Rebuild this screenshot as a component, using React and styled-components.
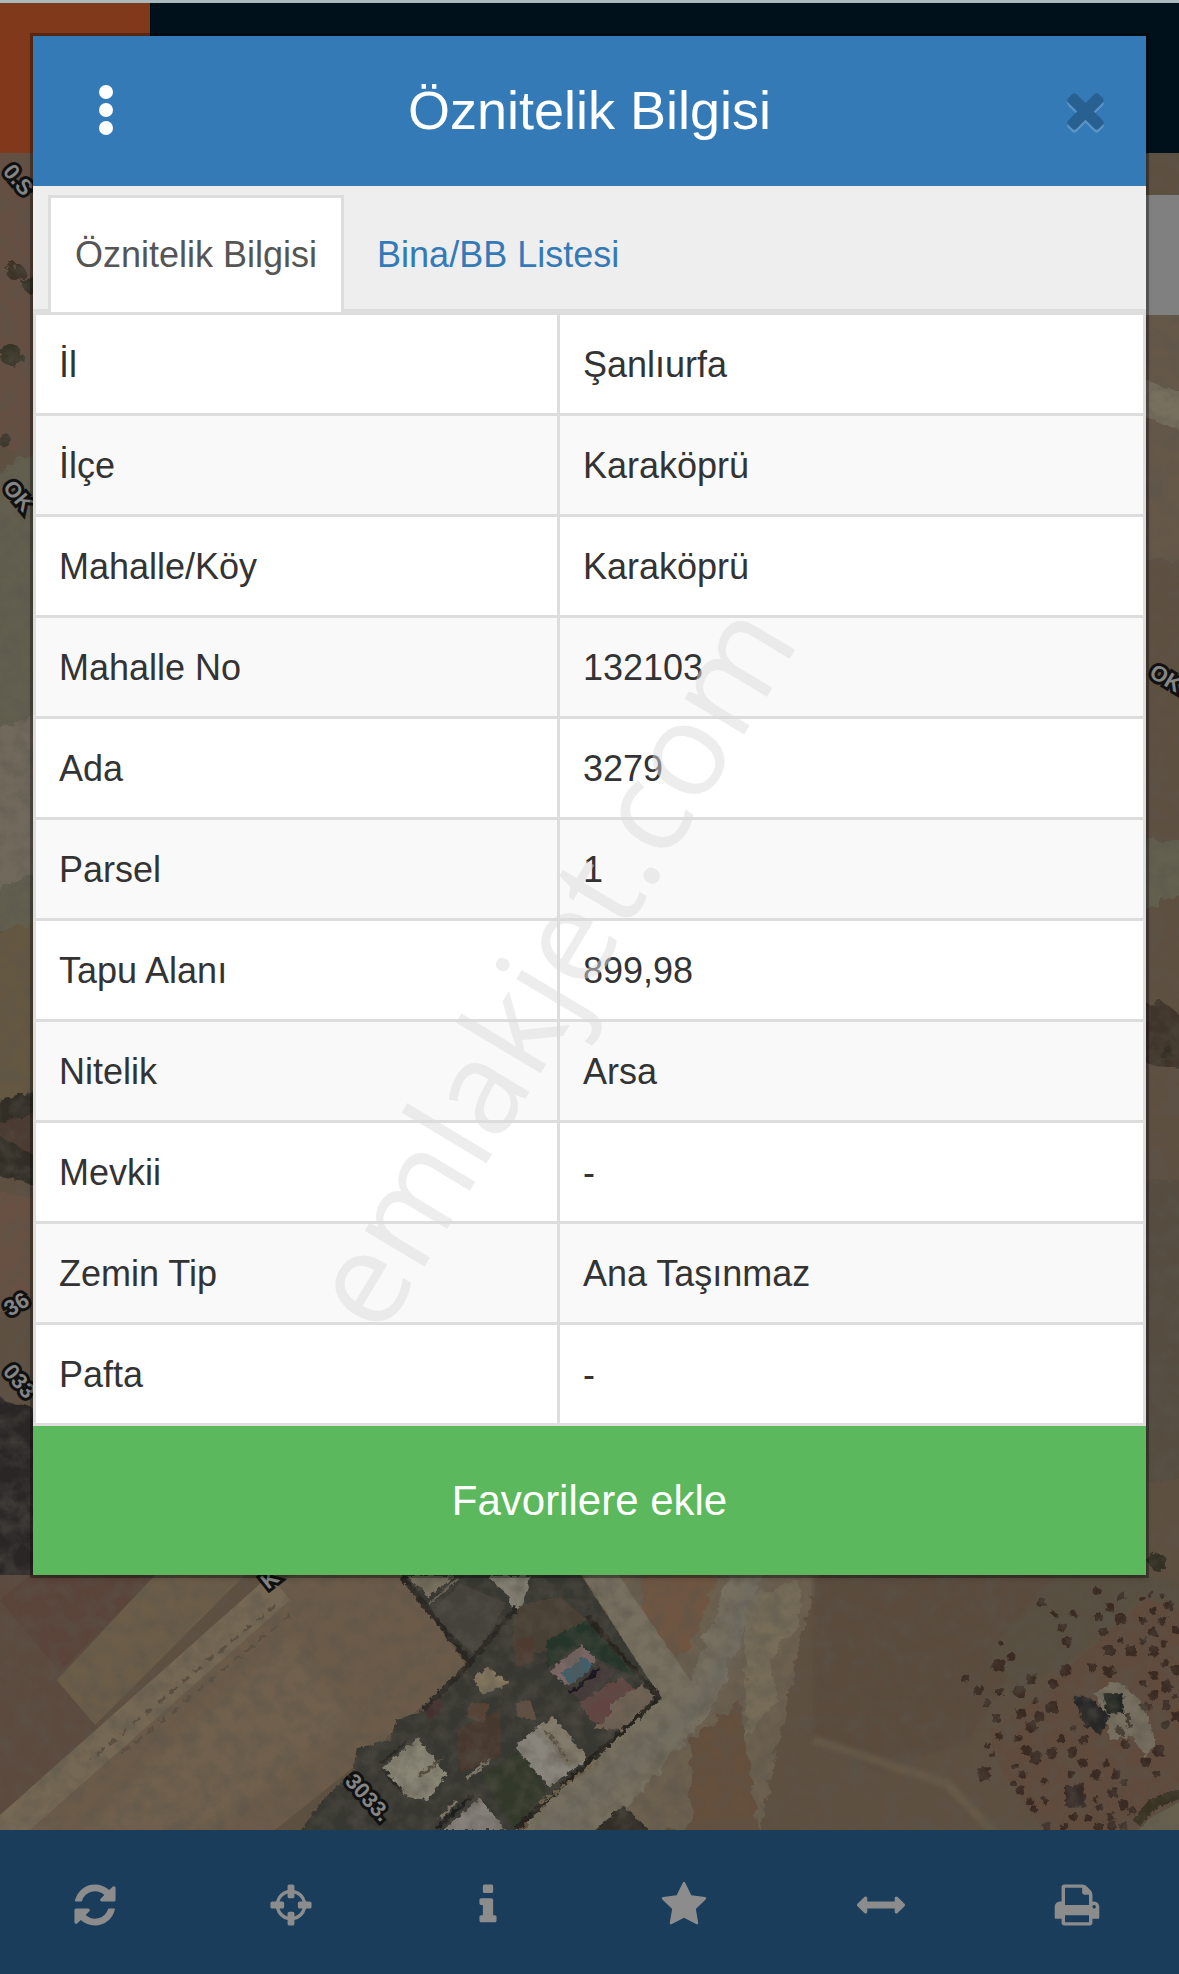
import styled, { createGlobalStyle } from "styled-components";

const rows = [
  ["İl", "Şanlıurfa"],
  ["İlçe", "Karaköprü"],
  ["Mahalle/Köy", "Karaköprü"],
  ["Mahalle No", "132103"],
  ["Ada", "3279"],
  ["Parsel", "1"],
  ["Tapu Alanı", "899,98"],
  ["Nitelik", "Arsa"],
  ["Mevkii", "-"],
  ["Zemin Tip", "Ana Taşınmaz"],
  ["Pafta", "-"],
];

// 1792 birimlik ikon çizimleri
const icons = {
  refresh:
    "M1639 1056q0 5-1 7-64 268-268 434.5t-478 166.5q-146 0-282.5-55t-243.5-157l-129 129q-19 19-45 19t-45-19-19-45v-448q0-26 19-45t45-19h448q26 0 45 19t19 45-19 45l-137 137q71 66 161 102t187 36q134 0 250-65t186-179q11-17 53-117 8-23 30-23h192q13 0 22.5 9.5t9.5 22.5zm25-800v448q0 26-19 45t-45 19h-448q-26 0-45-19t-19-45 19-45l138-138q-148-137-349-137-134 0-250 65t-186 179q-11 17-53 117-8 23-30 23h-199q-13 0-22.5-9.5t-9.5-22.5v-7q65-268 270-434.5t480-166.5q146 0 284 55.5t245 156.5l130-129q19-19 45-19t45 19 19 45z",
  crosshairs:
    "M1325 1024h-109q-26 0-45-19t-19-45v-128q0-26 19-45t45-19h109q-32-108-112.5-188.5t-188.5-112.5v109q0 26-19 45t-45 19h-128q-26 0-45-19t-19-45v-109q-108 32-188.5 112.5t-112.5 188.5h109q26 0 45 19t19 45v128q0 26-19 45t-45 19h-109q32 108 112.5 188.5t188.5 112.5v-109q0-26 19-45t45-19h128q26 0 45 19t19 45v109q108-32 188.5-112.5t112.5-188.5zm339-192v128q0 26-19 45t-45 19h-143q-37 161-154.5 278.5t-278.5 154.5v143q0 26-19 45t-45 19h-128q-26 0-45-19t-19-45v-143q-161-37-278.5-154.5t-154.5-278.5h-143q-26 0-45-19t-19-45v-128q0-26 19-45t45-19h143q37-161 154.5-278.5t278.5-154.5v-143q0-26 19-45t45-19h128q26 0 45 19t19 45v143q161 37 278.5 154.5t154.5 278.5h143q26 0 45 19t19 45z",
  info: "M1216 1344v128q0 26-19 45t-45 19h-512q-26 0-45-19t-19-45v-128q0-26 19-45t45-19h64v-384h-64q-26 0-45-19t-19-45v-128q0-26 19-45t45-19h384q26 0 45 19t19 45v576h64q26 0 45 19t19 45zm-128-1152v192q0 26-19 45t-45 19h-256q-26 0-45-19t-19-45v-192q0-26 19-45t45-19h256q26 0 45 19t19 45z",
  star: "M1728 647q0 22-26 48l-363 354 86 500q1 7 1 20 0 21-10.5 35.5t-30.5 14.5q-19 0-40-12l-449-236-449 236q-22 12-40 12-21 0-31.5-14.5t-10.5-35.5q0-6 2-20l86-500-364-354q-25-27-25-48 0-37 56-46l502-73 225-455q19-41 49-41t49 41l225 455 502 73q56 9 56 46z",
  arrows:
    "M1792 896q0 26-19 45l-256 256q-19 19-45 19t-45-19-19-45v-128h-1024v128q0 26-19 45t-45 19-45-19l-256-256q-19-19-19-45t19-45l256-256q19-19 45-19t45 19 19 45v128h1024v-128q0-26 19-45t45-19 45 19l256 256q19 19 19 45z",
  print:
    "M448 1536h896v-256h-896v256zm0-640h896v-384h-160q-40 0-68-28t-28-68v-160h-640v640zm1152 64q0-26-19-45t-45-19-45 19-19 45 19 45 45 19 45-19 19-45zm128 0v416q0 13-9.5 22.5t-22.5 9.5h-224v160q0 40-28 68t-68 28h-960q-40 0-68-28t-28-68v-160h-224q-13 0-22.5-9.5t-9.5-22.5v-416q0-79 56.5-135.5t135.5-56.5h64v-544q0-40 28-68t68-28h672q40 0 88 20t76 48l152 152q28 28 48 76t20 88v256h64q79 0 135.5 56.5t56.5 135.5z",
  times:
    "M1490 1322q0 40-28 68l-136 136q-28 28-68 28t-68-28l-294-294-294 294q-28 28-68 28t-68-28l-136-136q-28-28-28-68t28-68l294-294-294-294q-28-28-28-68t28-68l136-136q28-28 68-28t68 28l294 294 294-294q28-28 68-28t68 28l136 136q28 28 28 68t-28 68l-294 294 294 294q28 28 28 68z",
};

const tools = [
  ["refresh", "Yenile"],
  ["crosshairs", "Konumum"],
  ["info", "Bilgi"],
  ["star", "Favoriler"],
  ["arrows", "Ölçüm"],
  ["print", "Yazdır"],
];

// ağaçlar: x, y, boyut
const trees = [
  [785, 98, 26], [825, 132, 20], [846, 172, 24], [880, 130, 22], [862, 215, 28],
  [950, 62, 24], [1022, 80, 22], [988, 113, 24], [1022, 146, 34], [955, 140, 22],
  [970, 184, 26], [1088, 150, 22], [1120, 122, 24], [1148, 150, 26], [1118, 186, 26],
  [1166, 105, 26], [1086, 86, 16], [1110, 76, 14], [1146, 76, 14], [1186, 180, 20],
  [1022, 212, 16], [1088, 212, 20], [1054, 242, 34], [1122, 244, 32], [1150, 222, 16],
  [988, 242, 34], [986, 304, 34], [936, 292, 24], [858, 300, 32], [1122, 316, 26],
  [1154, 280, 24], [1188, 300, 30], [1090, 342, 22], [1160, 350, 32], [1188, 376, 16],
  [694, 260, 24], [656, 286, 38], [664, 222, 14], [558, 324, 20], [596, 362, 28],
  [660, 366, 24], [718, 364, 34], [754, 328, 30], [820, 342, 26], [622, 400, 22],
  [764, 390, 18], [814, 412, 34], [724, 432, 32], [778, 440, 30], [650, 444, 24],
  [754, 470, 34], [656, 498, 22], [714, 506, 22], [878, 474, 16], [846, 506, 22],
  [1120, 376, 28], [1156, 406, 26], [1100, 410, 24], [1188, 440, 26], [1158, 466, 24],
  [1136, 544, 34], [1098, 574, 28], [1038, 524, 26], [910, 510, 26], [880, 546, 32],
  [814, 550, 30], [740, 540, 30], [768, 564, 34], [624, 528, 18], [636, 556, 18],
  [612, 612, 40], [910, 578, 26], [978, 582, 22], [948, 614, 30], [1008, 612, 28],
  [874, 612, 20], [1034, 638, 20], [1132, 612, 20], [794, 632, 22], [726, 614, 20],
  [700, 640, 16], [720, 662, 22], [708, 588, 16], [1000, 668, 26], [944, 690, 18],
  [960, 712, 20], [746, 694, 22], [794, 692, 20], [762, 716, 20], [1030, 704, 30],
  [1056, 722, 24], [880, 740, 22], [924, 746, 22], [990, 742, 26], [800, 770, 24],
  [956, 770, 26], [996, 768, 26], [1030, 768, 24], [852, 770, 18],
];

function Icon({ name, size }) {
  return (
    <svg width={size} height={size} viewBox="0 0 1792 1792" aria-hidden="true">
      <path d={icons[name]} fill="currentColor" />
    </svg>
  );
}

function Satellite() {
  return (
    <MapSvg viewBox="0 153 1179 1677" preserveAspectRatio="xMidYMid slice">
      <defs>
        <filter id="soil" x="0" y="0" width="100%" height="100%">
          <feTurbulence type="fractalNoise" baseFrequency="0.06" numOctaves="5" seed="7" />
          <feColorMatrix values="0 0 0 0 0.1  0 0 0 0 0.09  0 0 0 0 0.07  2 0 0 0 -0.75" />
        </filter>
        <filter id="rough" x="-10%" y="-10%" width="120%" height="120%">
          <feTurbulence type="fractalNoise" baseFrequency="0.09" numOctaves="3" seed="3" />
          <feDisplacementMap in="SourceGraphic" scale="12" />
        </filter>
        <filter id="ragged" x="-5%" y="-5%" width="110%" height="110%">
          <feTurbulence type="fractalNoise" baseFrequency="0.2" numOctaves="2" seed="5" />
          <feDisplacementMap in="SourceGraphic" scale="7" xChannelSelector="R" yChannelSelector="G" />
        </filter>
        <filter id="haze">
          <feGaussianBlur stdDeviation="7" />
        </filter>
      </defs>
      <rect y="153" width="1179" height="1677" fill="#5e5041" />

      {/* sol kenar */}
      <g filter="url(#rough)">
        <path d="M-20 140H60V470L-20 440Z" fill="#654f42" />
        <path d="M-20 480L60 440V930H-20Z" fill="#645e50" />
        <path d="M-20 740L60 700V860L-20 900Z" fill="#716a5b" />
        <path d="M-20 940L60 910V1100H-20Z" fill="#655942" />
        <path d="M-20 1110L60 1080V1190L20 1180L-20 1170Z" fill="#302d27" />
        <path d="M-20 1125L60 1110V1170Z" fill="#4c3a31" />
        <path d="M-20 1190L60 1200V1290L-20 1320Z" fill="#675143" />
        <path d="M-20 1390L60 1420V1600L0 1612L-20 1600Z" fill="#2b2628" />
        <circle cx="11" cy="355" r="11" fill="#373528" />
        <circle cx="16" cy="272" r="9" fill="#3e3126" />
        <circle cx="30" cy="284" r="8" fill="#38352c" />
        <circle cx="4" cy="440" r="7" fill="#3c392c" />
      </g>

      {/* sağ kenar */}
      <g filter="url(#rough)">
        <path d="M1130 310H1200V560H1130Z" fill="#65584a" />
        <path d="M1130 375L1200 400V440L1130 410Z" fill="#78705f" />
        <path d="M1130 840H1200V880L1130 920Z" fill="#64604f" />
        <path d="M1130 1010L1160 1000L1200 1030V1075L1130 1060Z" fill="#40352a" />
        <path d="M1130 1180H1200V1480H1130Z" fill="#564d3f" />
        <circle cx="1166" cy="1052" r="7" fill="#302b20" />
        <circle cx="1158" cy="1562" r="9" fill="#332d22" />
      </g>

      {/* tarlalar */}
      <path d="M0 1575H160L55 1680L100 1730L0 1830Z" fill="#5d4a3e" />
      <path d="M30 1575H155L60 1672L0 1600Z" fill="#5b443a" />
      <path d="M155 1575H245L95 1725L57 1680Z" fill="#6c5d49" />
      <path d="M290 1575H402L468 1668L420 1708L350 1770L275 1830H0V1822Z" fill="#6c5b49" />
      <path d="M170 1745L290 1640L350 1720L210 1830H90Z" fill="#71604d" filter="url(#haze)" />
      <path d="M270 1575L0 1815V1830H30L290 1600Z" fill="#756854" />
      <path d="M275 1605L90 1760M290 1615L120 1755" stroke="#5b5042" strokeWidth="3" strokeDasharray="9 7" filter="url(#ragged)" />

      {/* yol ve açık toprak */}
      <g filter="url(#rough)">
        <path d="M560 1570H820L800 1640L760 1830H520L640 1700Z" fill="#6c604f" />
        <path d="M640 1570H720L690 1650L650 1670Z" fill="#6f5742" />
        <path d="M690 1740L740 1700L760 1840H690Z" fill="#654f3e" />
        <path d="M580 1570L655 1690L510 1840H600L715 1705L765 1570H730L690 1680L615 1570Z" fill="#777060" />
        <path d="M745 1600L800 1580L800 1620L770 1660L778 1700L745 1740Z" fill="#766c59" />
      </g>
      <path d="M755 1570C735 1640 720 1690 680 1720L540 1835" fill="none" stroke="#6d6962" strokeWidth="14" opacity="0.75" filter="url(#haze)" />

      {/* bahçeler ve evler */}
      <g transform="translate(300 1570) scale(0.3333)">
        <g filter="url(#rough)">
          <path d="M300 10H840L1080 380L640 785H0L60 700L160 600L170 535L270 510L290 450L370 420L510 290L460 220Z" fill="#393731" />
          <path d="M390 130L480 40L620 100L530 260Z" fill="#45423a" />
          <path d="M640 110L780 80L860 150L720 250L640 240Z" fill="#4a4134" />
          <path d="M740 210L860 150L1010 320L960 300L820 230L740 300Z" fill="#26352a" />
          <path d="M470 480L600 420L600 560L480 610Z" fill="#46372d" />
          <path d="M540 620L660 540L740 660L640 780Z" fill="#30372c" />
          <path d="M650 400L690 390L710 450L650 440Z" fill="#605042" />
          <path d="M510 400L570 400L550 460L500 440Z" fill="#574334" />
          <path d="M370 420L420 370L430 410L390 450Z" fill="#432e2f" />
          <path d="M640 210L700 200L700 270L650 290Z" fill="#4e3a32" />
        </g>
      </g>
      <g filter="url(#ragged)">
        <g transform="translate(300 1570) scale(0.3333)">
          <path d="M320 18L385 85L460 18Z" fill="#77705e" />
          <path d="M385 105L475 25" stroke="#6c6656" strokeWidth="8" />
          <path d="M560 18H690L680 70L660 112L632 112L625 75Z" fill="#817d71" />
          <path d="M520 325L560 290L628 340L545 375Z" fill="#857861" />
          <path d="M250 590L355 505L440 615L380 690L320 680Z" fill="#8a8676" />
          <path d="M245 580L320 515M250 600L310 670" stroke="#292621" strokeWidth="7" />
          <path d="M355 620L430 565" stroke="#57503f" strokeWidth="8" />
          <path d="M645 530L730 455L860 570L745 650Z" fill="#89857b" />
          <path d="M720 470L760 440L865 565L800 590Z" fill="#827a6a" />
          <path d="M735 480L775 530L805 575" fill="none" stroke="#5b5245" strokeWidth="9" strokeDasharray="14 8" />
          <path d="M430 780L540 683L615 780Z" fill="#85817a" />
          <path d="M420 745L470 695M500 625L570 570" stroke="#7c7567" strokeWidth="9" />
          <path d="M410 775L520 675" stroke="#1d1d1a" strokeWidth="12" />
          <path d="M750 300L845 225L890 270L800 350Z" fill="#7c6866" />
          <path d="M784 310L850 258L882 288L812 342Z" fill="#425e6c" />
          <path d="M815 365L905 275L945 310L850 400Z" fill="#453b3a" />
          <path d="M810 370L900 295" stroke="#1b1820" strokeWidth="11" />
          <path d="M840 400L960 320L1010 360L1000 430L930 480L870 450Z" fill="#624543" />
          <path d="M930 400L1030 345L1065 380L970 480L880 475L930 440Z" fill="#706455" />
          <path d="M860 140L1078 382L730 700L650 775" fill="none" stroke="#25241c" strokeWidth="14" />
          <path d="M720 700L900 570" stroke="#70634d" strokeWidth="9" strokeDasharray="20 5" />
          <path d="M305 18L505 270M650 110L500 290L370 420" fill="none" stroke="#292821" strokeWidth="16" />
          <path d="M880 785L970 705L1050 785Z" fill="#302f27" />
        </g>
      </g>

      {/* sağdaki bahçe */}
      <g transform="translate(780 1570) scale(0.3333)">
        <path d="M100 18H1080L780 180L560 520L300 600L100 520Z" fill="#5a4c3e" filter="url(#haze)" />
        <path d="M830 20H1200V120L1080 90L900 250L700 380L640 230Z" fill="#585040" filter="url(#haze)" />
        <path d="M1100 85L1200 120V660L1060 785H790L640 560L630 480L750 400Z" fill="#604b3d" filter="url(#rough)" />
        <path d="M100 510L500 640L640 785" fill="none" stroke="#6c5f4c" strokeWidth="26" opacity="0.7" filter="url(#haze)" />
        <path d="M1200 695L1110 745L1070 785H1200Z" fill="#68604f" />
        <path d="M1200 670L1120 700L1070 760" fill="none" stroke="#373022" strokeWidth="32" filter="url(#rough)" />
      </g>
      <g filter="url(#ragged)">
        <g transform="translate(780 1570) scale(0.3333)">
          {trees.map(([x, y, s]) => (
            <rect key={`${x}-${y}`} x={x - s / 2} y={y - s / 2} width={s} height={s} rx={s / 3} fill="#3b2c22" />
          ))}
          <path d="M940 370L1010 330L1080 390L1110 460L1130 520L1100 560L1060 500L990 510L980 440Z" fill="#777060" />
          <path d="M880 380H930L990 440L960 495L910 460Z" fill="#282827" />
          <path d="M970 370H1030V430H980Z" fill="#242723" />
          <path d="M1040 430L1050 470M1010 470L1030 500M1080 400L1100 420" stroke="#453c31" strokeWidth="14" />
          <path d="M855 650L910 640L920 710H855Z" fill="#362c27" />
        </g>
      </g>
      <rect y="153" width="1179" height="1677" filter="url(#soil)" opacity="0.55" />

      <MapLabel transform="translate(2 172) rotate(50)">0.S</MapLabel>
      <MapLabel transform="translate(2 488) rotate(50)">OK</MapLabel>
      <MapLabel transform="translate(10 1317) rotate(-32)">36</MapLabel>
      <MapLabel transform="translate(2 1372) rotate(50)">033</MapLabel>
      <MapLabel transform="translate(1148 676) rotate(31)">OK</MapLabel>
      <MapLabel transform="translate(268 1590) rotate(-38)">K</MapLabel>
      <MapLabel transform="translate(344 1782) rotate(48)">3033.</MapLabel>
    </MapSvg>
  );
}

export default function App() {
  return (
    <Page>
      <GlobalStyle />
      <StatusLine />
      <TopBar>
        <TopMenu type="button" aria-label="Ana menü" />
      </TopBar>
      <MapArea>
        <Satellite />
        <SearchPanel />
      </MapArea>
      <BottomBar>
        {tools.map(([name, label]) => (
          <ToolButton key={name} type="button" aria-label={label}>
            <Icon name={name} size={48} />
          </ToolButton>
        ))}
      </BottomBar>

      <Overlay>
        <Modal role="dialog" aria-labelledby="modal-title">
          <ModalHeader>
            <MenuButton type="button" aria-label="Seçenekler">
              <svg width="14" height="50" viewBox="0 0 14 50" fill="currentColor" aria-hidden="true">
                <circle cx="7" cy="7" r="7" />
                <circle cx="7" cy="25" r="7" />
                <circle cx="7" cy="43" r="7" />
              </svg>
            </MenuButton>
            <Title id="modal-title">Öznitelik Bilgisi</Title>
            <CloseButton type="button" aria-label="Kapat">
              <Icon name="times" size={55} />
            </CloseButton>
          </ModalHeader>
          <Tabs>
            <Tab href="#oznitelik" $active>
              Öznitelik Bilgisi
            </Tab>
            <Tab href="#bina">Bina/BB Listesi</Tab>
          </Tabs>
          <Table>
            <tbody>
              {rows.map(([label, value]) => (
                <tr key={label}>
                  <LabelCell scope="row">{label}</LabelCell>
                  <Cell>{value}</Cell>
                </tr>
              ))}
            </tbody>
          </Table>
          <FavoriteButton type="button">Favorilere ekle</FavoriteButton>
        </Modal>
      </Overlay>
      <Watermark>emlakjet.com</Watermark>
    </Page>
  );
}

const GlobalStyle = createGlobalStyle`
  * {
    box-sizing: border-box;
  }
  body {
    margin: 0;
    font-family: "Liberation Sans", Arial, sans-serif;
    font-size: 36px;
    color: #333;
  }
  button {
    border: 0;
    padding: 0;
    background: none;
    font: inherit;
    cursor: pointer;
  }
`;

const Page = styled.div`
  position: relative;
  display: flex;
  flex-direction: column;
  min-height: 100vh;
  overflow: hidden;
`;

const StatusLine = styled.div`
  height: 3px;
  background: #aab9be;
`;

const TopBar = styled.header`
  display: flex;
  height: 150px;
  background: #00111b;
`;

const TopMenu = styled.button`
  width: 150px;
  background: #80391b;
`;

const MapArea = styled.main`
  position: relative;
  display: flex;
  flex: 1;
  flex-direction: column;
  min-height: 1500px;
  padding-top: 42px;
`;

const MapSvg = styled.svg`
  position: absolute;
  inset: 0;
  width: 100%;
  height: 100%;
`;

const MapLabel = styled.text`
  font-family: "Liberation Sans", Arial, sans-serif;
  font-size: 22px;
  font-weight: 700;
  fill: #858585;
  stroke: #111;
  stroke-width: 6px;
  paint-order: stroke;
`;

const SearchPanel = styled.div`
  position: relative;
  align-self: flex-end;
  width: 50%;
  height: 120px;
  background: #808080;
`;

const BottomBar = styled.nav`
  display: grid;
  grid-template-columns: repeat(6, 1fr);
  height: 144px;
  background: #1a3d5b;
`;

const ToolButton = styled.button`
  display: flex;
  align-items: center;
  justify-content: center;
  padding: 5px 7px 0 0;
  color: #8c8c8c;
`;

const Overlay = styled.div`
  position: absolute;
  inset: 0;
  padding: 36px 33px;
`;

const Modal = styled.section`
  background: #fff;
  box-shadow: 0 0 0 3px rgba(0, 0, 0, 0.3), 0 3px 6px rgba(0, 0, 0, 0.2);
`;

const ModalHeader = styled.header`
  display: grid;
  grid-template-columns: 145px 1fr 145px;
  align-items: center;
  height: 150px;
  padding-bottom: 2px;
  background: #337ab7;
`;

const Title = styled.h1`
  margin: 0;
  color: #fff;
  font-size: 54px;
  font-weight: 400;
  line-height: 60px;
  text-align: center;
`;

const MenuButton = styled.button`
  display: flex;
  justify-content: center;
  color: #fff;
`;

const CloseButton = styled.button`
  display: flex;
  align-items: center;
  justify-content: center;
  padding: 0 0 2px 24px;
  color: #000;
  opacity: 0.2;
  svg {
    filter: drop-shadow(0 3px 0 #fff);
  }
`;

const Tabs = styled.nav`
  display: flex;
  align-items: flex-end;
  height: 126px;
  padding: 0 15px;
  background: #eee;
  box-shadow: inset 0 -3px 0 #ddd;
`;

const Tab = styled.a`
  display: flex;
  align-items: center;
  height: 117px;
  margin-right: 6px;
  padding: 0 24px;
  border: 3px solid ${({ $active }) => ($active ? "#ddd" : "transparent")};
  border-bottom: 0;
  background: ${({ $active }) => ($active ? "#fff" : "transparent")};
  color: ${({ $active }) => ($active ? "#555" : "#337ab7")};
  text-decoration: none;
  white-space: nowrap;
`;

const Table = styled.table`
  width: 100%;
  border-collapse: collapse;

  tr:nth-child(even) {
    background: #f9f9f9;
  }
`;

const Cell = styled.td`
  height: 101px;
  padding: 2px 23px 0;
  border: 3px solid #ddd;
  line-height: 48px;
  text-align: left;
`;

const LabelCell = styled(Cell).attrs({ as: "th" })`
  width: 47.2%;
  font-weight: 400;
`;

const FavoriteButton = styled.button`
  display: block;
  width: 100%;
  height: 149px;
  background: #5cb85c;
  color: #fff;
  font-size: 42px;
`;

const Watermark = styled.div`
  position: absolute;
  top: 964px;
  left: 46.5%;
  transform: translate(-50%, -50%) rotate(-59deg);
  color: rgba(220, 220, 220, 0.5);
  font-family: "Open Sans", "Noto Sans", sans-serif;
  font-size: 130px;
  line-height: 1;
  pointer-events: none;
`;
